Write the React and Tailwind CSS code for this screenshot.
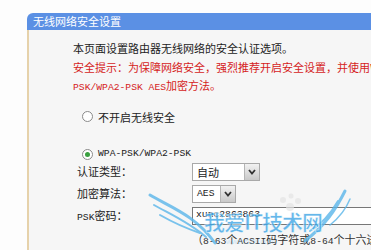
import React from 'react';

const cjk = { fontFamily: '"Noto Sans CJK SC", "Noto Sans", sans-serif' };

const Mono = ({ children, className = '' }) => (
  <span className={`font-['Liberation_Mono',monospace] text-[9.7px] ${className}`}>{children}</span>
);

const Radio = ({ checked }) => (
  <span className="w-[11px] h-[11px] rounded-full border border-[#8a8a8a] bg-white flex items-center justify-center shrink-0">
    {checked && <span className="w-[5px] h-[5px] rounded-full bg-[#3aa040]" />}
  </span>
);

const Arrow = () => (
  <span className="w-[15px] h-full border-l border-[#b5b5b5] bg-gradient-to-b from-[#f2f2f2] to-[#c9c9c9] flex items-center justify-center">
    <svg width="8" height="6" viewBox="0 0 8 6">
      <path d="M1 1 L4 4.5 L7 1" fill="none" stroke="#333" strokeWidth="1.8" />
    </svg>
  </span>
);

const Watermark = () => (
  <div className="absolute left-[140px] top-[185px] w-[231px] h-[65px] pointer-events-none">
    <svg width="231" height="65" viewBox="0 0 231 65" className="absolute inset-0">
      <g fill="none" stroke="#5ab6ea" strokeLinecap="round" opacity="0.8">
        <path d="M10 10 C30 22 55 30 75 58" strokeWidth="3" />
        <path d="M14 20 C32 30 50 38 66 52" strokeWidth="2" />
        <path d="M20 30 C34 38 48 44 60 48" strokeWidth="2" />
        <path d="M205 6 C195 26 185 40 165 56" strokeWidth="3" />
        <path d="M198 16 C190 30 180 40 170 46" strokeWidth="2" />
        <path d="M210 14 C206 24 200 32 190 40" strokeWidth="1.5" />
      </g>
      <g fill="#e4e4e4" opacity="0.7">
        <circle cx="150" cy="22" r="4" />
        <circle cx="158" cy="16" r="3" />
        <circle cx="143" cy="15" r="3" />
        <circle cx="151" cy="11" r="2.5" />
      </g>
    </svg>
    <div
      className="absolute left-[64px] top-[24px] text-[21px] leading-[24px] font-bold text-[#3fa6e6] opacity-80 tracking-[-1px] [-webkit-text-stroke:0.5px_#fff]"
      style={cjk}
    >
      我爱IT技术网
    </div>
    <div className="absolute left-[86px] top-[52px] text-[8px] leading-[10px] text-[#8cc8ef] opacity-40 font-['Liberation_Sans',sans-serif]">
      www.52it.com
    </div>
  </div>
);

export default function App() {
  return (
    <div className="relative w-[371px] h-[250px] overflow-hidden bg-[#fdfdfd] pt-[13px] pl-[27px]" style={cjk}>
      <div className="flex flex-col h-full">
        <div className="h-[17px] bg-[#5b90e4] rounded-tl-[6px] text-white text-[11px] leading-[17px] pl-[6px]">
          无线网络安全设置
        </div>
        <div className="flex-1 bg-[#f6f6f6] border-l-2 border-[#e6d2ab] pl-[44px] pt-[9px] text-[11px] text-[#222]">
          <div className="leading-[18.5px]">
            <div>本页面设置路由器无线网络的安全认证选项。</div>
            <div className="text-[#d51c1c] whitespace-nowrap">安全提示：为保障网络安全，强烈推荐开启安全设置，并使用WPA-</div>
            <div className="text-[#d51c1c]">
              <Mono>PSK/WPA2-PSK AES</Mono>加密方法。
            </div>
          </div>
          <div className="flex items-center gap-[3px] mt-[12px] pl-[9px] h-[14px]">
            <Radio />
            <span className="leading-[14px] pl-[2px]">不开启无线安全</span>
          </div>
          <div className="flex items-center gap-[5px] mt-[24px] pl-[9px] h-[14px]">
            <Radio checked />
            <Mono>WPA-PSK/WPA2-PSK</Mono>
          </div>
          <div className="grid grid-cols-[115px_1fr] gap-y-[4px] pl-[4px] items-center mt-[1px]">
            <span>认证类型：</span>
            <span className="flex w-[68px] h-[18px] border border-[#a9a9a9] bg-white items-center">
              <span className="flex-1 pl-[4px] leading-[16px]">自动</span>
              <Arrow />
            </span>
            <span>加密算法：</span>
            <span className="flex w-[44px] h-[18px] border border-[#a9a9a9] bg-white items-center">
              <Mono className="flex-1 pl-[4px] leading-[16px]">AES</Mono>
              <Arrow />
            </span>
            <span>
              <Mono>PSK</Mono>密码：
            </span>
            <span className="flex w-[200px] h-[18px] border border-[#777] bg-white items-center pl-[3px]">
              <Mono className="text-[#111]">xunc2863863</Mono>
            </span>
            <span />
            <span className="whitespace-nowrap text-[#333] leading-[20px]">
              （<Mono>8-63</Mono>个<Mono>ACSII</Mono>码字符或<Mono>8-64</Mono>个十六进制字符）
            </span>
          </div>
        </div>
      </div>
      <Watermark />
    </div>
  );
}
